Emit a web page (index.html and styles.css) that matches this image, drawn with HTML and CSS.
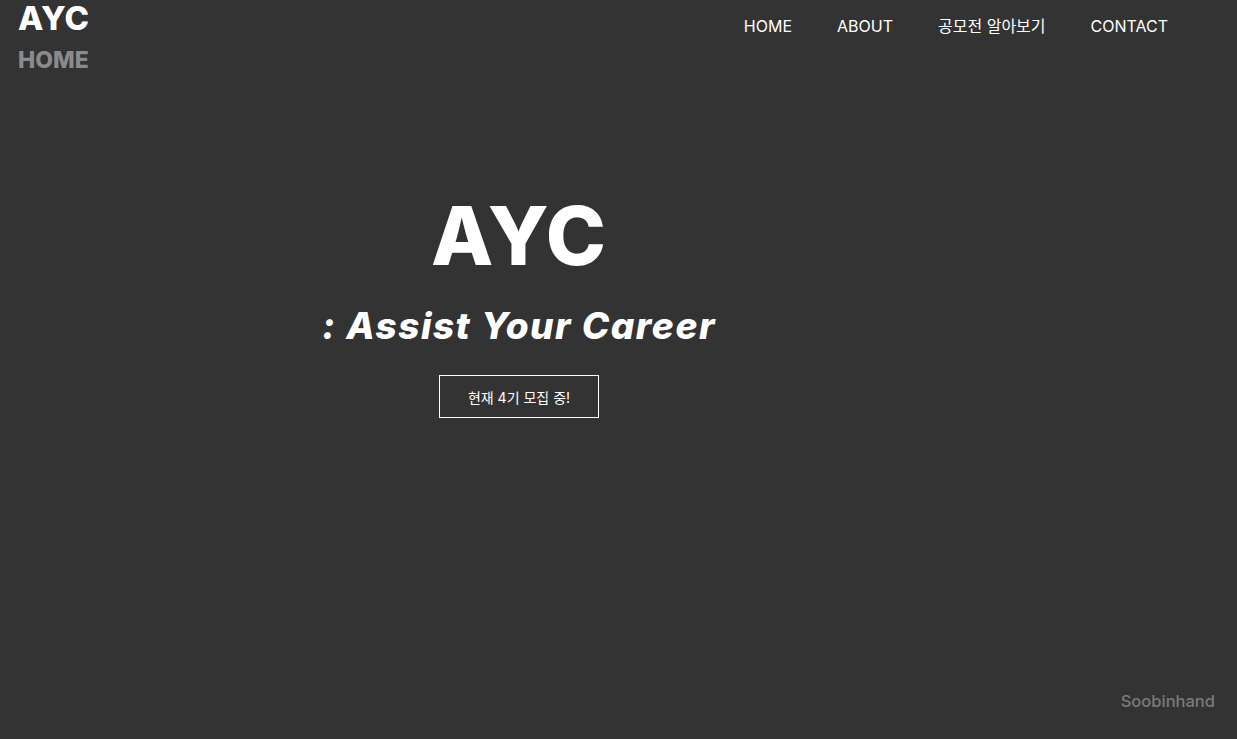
FILE: index.html
```html
<!DOCTYPE html>
<html lang="ko">
<head>
<meta charset="utf-8">
<title>AYC</title>
<link rel="stylesheet" href="styles.css">
</head>
<body>
<header class="header">
  <div class="brand">
    <div class="logo">AYC</div>
    <div class="page-name">HOME</div>
  </div>
  <nav class="nav">
    <a class="nav-link" href="#">HOME</a>
    <a class="nav-link" href="#">ABOUT</a>
    <a class="nav-link" href="#">공모전 알아보기</a>
    <a class="nav-link" href="#">CONTACT</a>
  </nav>
</header>
<main class="hero">
  <h1 class="hero-title">AYC</h1>
  <p class="hero-sub">: Assist Your Career</p>
  <a class="hero-btn" href="#">현재 4기 모집 중!</a>
</main>
<footer class="footer">Soobinhand</footer>
</body>
</html>
```

FILE: styles.css
```css
* { box-sizing: border-box; }
html, body { height: 100%; }
body {
  margin: 0;
  background: #333333;
  color: #ffffff;
  font-family: "Inter", "Noto Sans CJK KR", sans-serif;
  display: flex;
  flex-direction: column;
  overflow: hidden;
}
.header {
  display: flex;
  justify-content: space-between;
  align-items: flex-start;
  padding: 0 69px 0 18px;
}
.brand { display: flex; flex-direction: column; }
.logo {
  font-size: 33px;
  font-weight: 800;
  line-height: 36px;
  letter-spacing: 0.2px;
}
.page-name {
  font-size: 23px;
  font-weight: 800;
  color: #8a8b8d;
  line-height: 28px;
  margin-top: 10px;
}
.nav {
  display: flex;
  gap: 45px;
  padding-top: 16px;
}
.nav-link {
  color: #ffffff;
  text-decoration: none;
  font-size: 16px;
  line-height: 20px;
  font-weight: 400;
}
.hero {
  width: 1038px;
  display: flex;
  flex-direction: column;
  align-items: center;
  padding-top: 116px;
}
.hero-title {
  margin: 0;
  font-size: 81px;
  font-weight: 800;
  line-height: 92px;
  letter-spacing: 1px;
}
.hero-sub {
  margin: 22px 0 0;
  font-size: 37px;
  font-weight: 800;
  font-style: italic;
  line-height: 44px;
  letter-spacing: 1.5px;
}
.hero-btn {
  margin-top: 27px;
  display: flex;
  align-items: center;
  justify-content: center;
  width: 160px;
  height: 43px;
  border: 1px solid #ffffff;
  color: #ffffff;
  text-decoration: none;
  font-size: 14px;
}
.footer {
  margin-top: auto;
  align-self: flex-end;
  padding: 0 22px 28px 0;
  color: #7a7a7a;
  font-size: 16.5px;
  font-weight: 500;
}
```
